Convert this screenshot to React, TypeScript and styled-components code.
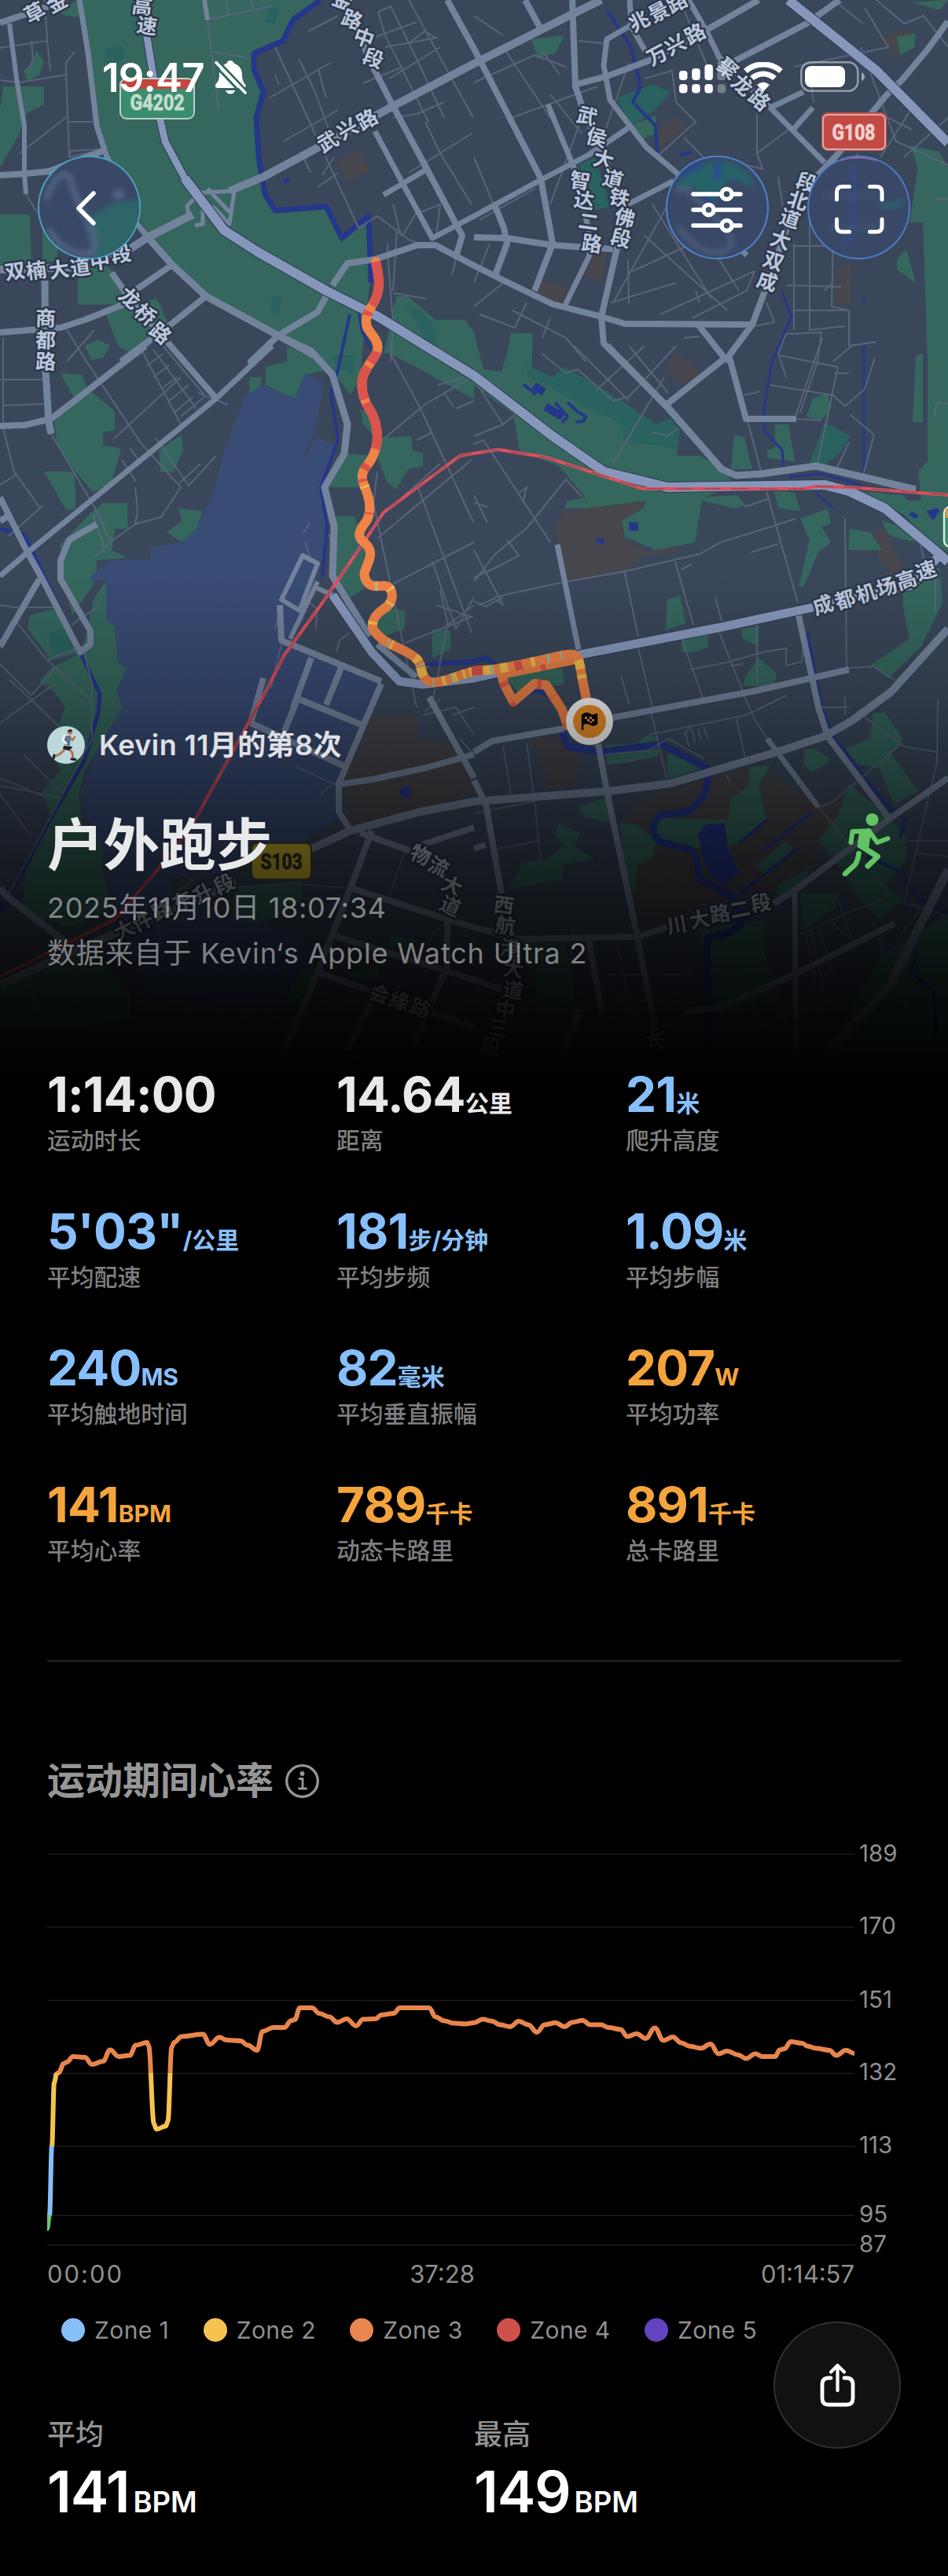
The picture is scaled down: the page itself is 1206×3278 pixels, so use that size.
import React from 'react';
import styled, { createGlobalStyle } from 'styled-components';


const GlobalStyle = createGlobalStyle`
	body {
		margin: 0;
		background: #000;
	}
	* {
		box-sizing: border-box;
	}
`;

const WHITE = '#e8e8e8';
const BLUE = '#87bffa';
const ORANGE = '#f4a43c';

const metrics = [
	{ value: '1:14:00', unit: '', label: '运动时长', color: WHITE },
	{ value: '14.64', unit: '公里', label: '距离', color: WHITE },
	{ value: '21', unit: '米', label: '爬升高度', color: BLUE },
	{ value: '5\'03"', unit: '/公里', label: '平均配速', color: BLUE },
	{ value: '181', unit: '步/分钟', label: '平均步频', color: BLUE },
	{ value: '1.09', unit: '米', label: '平均步幅', color: BLUE },
	{ value: '240', unit: 'MS', label: '平均触地时间', color: BLUE },
	{ value: '82', unit: '毫米', label: '平均垂直振幅', color: BLUE },
	{ value: '207', unit: 'W', label: '平均功率', color: ORANGE },
	{ value: '141', unit: 'BPM', label: '平均心率', color: ORANGE },
	{ value: '789', unit: '千卡', label: '动态卡路里', color: ORANGE },
	{ value: '891', unit: '千卡', label: '总卡路里', color: ORANGE },
];

const zones = [
	{ name: 'Zone 1', color: '#87bffa' },
	{ name: 'Zone 2', color: '#f6c350' },
	{ name: 'Zone 3', color: '#e8874f' },
	{ name: 'Zone 4', color: '#cf514c' },
	{ name: 'Zone 5', color: '#6443c0' },
];

// ---------- map data ----------

const greens = [
	'104,0 408,0 373,25 360,52 323,68 323,87 335,117 326,150 329,200 337,247 350,268 415,263 435,303 469,275 471,360 465,400 458,480 446,503 427,477 400,455 354,427 308,403 262,373 219,333 192,303 173,273 138,200 123,160 115,110 106,33',
	'4,110 56,110 56,133 35,143 23,173 0,213 0,140', '46,63 56,80 50,95 35,103 30,90 42,80',
	'70,14 100,0 100,22 84,20', '0,273 38,273 40,337 0,337', '54,273 73,273 73,333 54,333',
	'99,337 135,337 162,367 154,387 99,388', '135,400 154,392 200,380 215,415 175,455 150,440', '108,440 125,432 140,440 132,455 116,458',
	'504,377 519,377 554,407 592,407 603,423 603,508 558,483 535,470 496,450 488,450',
	'603,423 615,470 638,473 645,450 650,424 678,424 676,470 703,480 718,467 741,480 791,510 834,540 853,533 865,547 861,580 891,580 922,600 934,617 895,633 938,630 949,643 934,647 893,637 884,690 834,700 795,683 791,663 818,647 822,637 745,647 718,647 722,637 745,633 711,593 661,573 653,527 603,490',
	'676,50 718,45 707,67 684,75', '803,160 834,147 834,170 818,177', '1157,185 1195,193 1206,213 1206,460 1180,460 1174,283 1157,283 1168,213',
	'1153,317 1165,360 1141,343 1141,330', '1161,3 1206,0 1195,13', '1141,47 1165,43 1163,60 1145,70',
	'1180,440 1206,440 1206,703 1172,680 1149,653 1145,637 1172,637 1168,600 1180,587', '1165,453 1174,450 1174,537 1161,537',
	'934,553 947,557 957,597 930,597', '986,540 1003,540 1011,587 976,583 976,573 986,570', '1034,507 1053,500 1057,520 1045,535 1026,530',
	'984,623 1011,627 1018,650 991,647', '1018,660 1053,647 1057,667 1045,670 1057,690 1041,703 1022,747 1016,747 1030,687',
	'1080,673 1107,677 1122,700 1080,700', '1122,663 1157,673 1172,690 1149,687 1130,680',
	'1149,727 1195,723 1199,767 1172,823 1130,863 1107,847 1157,813 1149,773', '1095,625 1150,630 1165,660 1150,655',
	'849,763 865,758 872,793 847,802', '868,813 901,807 901,823 884,830 866,830', '943,800 965,797 965,823 945,813',
	'949,860 965,837 988,857 984,873 945,873', '641,860 715,850 718,870 661,883',
	'77,475 104,477 110,493 146,523 146,547 131,550 131,567 154,570 150,587 142,613 119,627 96,600 73,567 69,537 96,510',
	'56,600 94,600 96,623 96,647 85,650', '131,640 162,640 163,673 146,673 142,700 162,710 123,713 123,733 115,750 92,783 81,733 77,693 115,653',
	'202,573 231,553 233,573 221,600 204,600', '227,647 258,650 250,673 231,690 212,677 231,663', '317,480 333,480 331,500 317,503',
	'338,467 365,460 365,440 408,460 419,470 388,477 375,508 338,490', '38,783 77,773 104,830 65,840 35,800',
	'104,830 120,760 135,740 146,800 150,843 162,850 148,877 156,900 146,930 127,950 108,980 100,1010 104,1050 131,1060 131,1113 142,1157 90,1180 31,1163 31,1113 65,1040 54,1007 77,980 62,957 83,900 69,880 50,867 65,850',
	'442,577 475,580 458,620 419,620', '427,657 450,657 458,673 473,707 462,750 446,760 427,730', '458,520 480,530 480,560 462,540',
	'485,557 523,555 525,573 538,577 538,593 519,597 504,623 492,613 481,583', '488,773 515,777 515,800 481,813 473,793', '550,800 573,803 573,827 550,837',
	'788,1047 811,1050 834,1070 830,1093 811,1100 807,1137 799,1137', '736,1027 770,1015 776,1047 745,1040',
	'705,1060 711,1048 738,1060 730,1077 757,1093 718,1100 715,1120 649,1130 665,1097 695,1093 718,1077', '849,957 895,977 849,992',
	'770,948 810,946 820,937 838,937 838,962 800,970 772,974',
	'1111,907 1126,907 1149,940 1134,960 1149,980 1168,1007 1138,1023 1118,977 1091,973 1076,953 1107,940',
	'1080,997 1130,1040 1153,1067 1153,1093 1126,1127 1153,1143 1118,1170 1088,1137 1061,1093 1041,1070 1065,1040',
	'1024,953 1038,953 1057,967 1034,983 1022,973', '1018,1137 1065,1137 1065,1153 1022,1183', '888,1180 976,1170 972,1213 988,1273 911,1290',
	'1206,1163 1206,1340 1053,1340 1122,1213', '300,1128 385,1120 384,1150 345,1170 312,1180 296,1172', '500,1190 530,1195 520,1205 495,1203',
	'440,1240 481,1230 480,1245 465,1248', '365,1230 400,1220 395,1260 370,1275', '0,1255 70,1210 120,1215 165,1260 165,1300 0,1310', '665,1200 720,1198 735,1290 690,1290',
];

const darkGreens = [
	'668,463 703,480 718,467 741,480 791,510 834,540 853,533 865,547 861,573 841,567 795,563 788,537 749,520 707,497 672,480',
	'784,125 830,107 853,117 834,140 803,160', '736,210 757,200 776,263 753,268 749,233', '1049,537 1082,555 1068,577 1049,592 1030,590',
	'133,62 155,58 158,72 148,82 132,80', '515,385 535,395 556,420 556,445 540,432 528,408', '420,452 450,452 452,476 430,470',
	'342,8 355,10 350,30 338,28', '345,378 360,376 354,400 346,398', '60,805 85,800 95,825 70,838',
];

const browns = [
	'428,208 458,190 470,218 443,232', '705,670 718,650 834,637 841,653 815,660 791,663 795,687 826,703 857,687 861,703 818,707 803,723 722,740',
	'845,470 860,447 895,477 872,492', '1113,675 1126,673 1149,723 1134,733 1116,707', '840,162 860,148 873,163 838,190', '752,322 773,322 765,358 738,350',
	'688,355 723,367 714,387 680,372', '1063,345 1083,332 1082,388 1060,388', '1120,50 1138,38 1160,40 1140,75',
	'473,913 531,910 531,940 569,947 588,963 603,1010 531,1030 446,1053 435,1000', '676,940 715,937 741,970 726,1003 699,1003',
	'791,1047 818,1017 853,1003 903,990 949,977 991,990 1041,1027 1072,1010 1057,1063 1030,1103 980,1137 934,1143 849,1177 818,1180 807,1140',
];

const parkGreens = [
	'953,977 980,973 965,1000 972,1033 976,1043 941,1073 926,1077 903,1087 891,1080 841,1070 834,1053 841,1040 872,1043 926,1043 930,1017 953,1000',
	'960,1102 1000,1070 1008,1080 975,1115', '990,1125 1030,1105 1020,1130 988,1145',
];

const lake = '335,490 375,507 388,475 412,488 400,550 385,580 391,578 402,557 427,567 408,627 417,667 408,717 400,747 385,793 362,813 488,867 481,880 438,973 431,1040 385,1070 340,1085 285,1113 250,1108 215,1120 235,1150 290,1165 380,1190 404,1213 346,1280 192,1263 165,1213 146,1147 131,1080 100,1013 127,947 156,900 148,877 162,850 150,840 146,797 135,790 135,737 117,740 115,733 142,713 192,712 190,697 231,690 250,673 269,633 288,567 312,503';

const rivers = [
	{ w: 7, d: 'M408 0L373 25L360 52L323 68L323 87L335 117L326 150L329 200L337 247L350 268L415 263L435 303L469 275L472 360' },
	{ w: 4, d: 'M445 400L430 470L421 500L430 560L408 620L416 670L410 735' }, { w: 3, d: 'M456 395L460 420L472 445' },
	{ w: 5, d: 'M0 673L31 680L42 703L127 883L125 907L108 967L69 1033L0 1163' },
	{ w: 6, d: 'M542 845L603 842L618 837L630 845M658 890L680 878L705 885L722 910' },
	{ w: 9, d: 'M715 930L722 950L765 957L841 947L899 977Q906 1010 876 1033L841 1037Q820 1055 841 1072L876 1080Q890 1090 888 1117L934 1143L945 1170Q940 1188 899 1193L903 1340' },
	{ w: 4, d: 'M934 1143L1017 1078M972 1082L1033 1034M941 1073L975 1043' },
	{ w: 4, d: 'M772 13L803 60L815 110L805 130L834 160L836 197M865 198L880 193' },
	{ w: 3, d: 'M995 373L1007 403L982 460L972 520L972 547L995 573L997 595M1099 380L1099 388M1099 440L1099 607M1038 627L1060 647M1003 607L1045 603L1095 617' },
	{ w: 4, d: 'M1027 806L1045 900L1061 940L1130 1027L1151 1043L1145 1067M1103 1090L1141 1107L1176 1150L1206 1163M1168 1213L1157 1237L1188 1260L1191 1320' },
	{ w: 4, d: 'M666 489L682 502M706 512L722 530L715 538M722 512L735 524L745 530L742 536L733 537' },
	{ w: 10, d: 'M679 491L692 499M694 518L716 530' },
	{ w: 6, d: 'M759 687L769 690M361 231L368 229M1158 653L1167 658M1180 653L1192 650L1185 660' },
	{ w: 11, d: 'M800 670L812 670' },
];

const minorRoads = [
	'M0 61L60 52L57 0M40 52L42 75L36 90M60 52L64 90M84 90L84 80L95 66M84 90L88 200L133 190M88 155L118 155M0 102L25 105L84 95M25 195L86 148M88 200L90 192L128 190M33 247L47 270',
	'M264 25L278 140M264 25L345 8M272 66L313 73M320 0L321 10M290 20L288 0',
	'M350 60L456 290L480 275L520 305L540 312M360 180L430 140M342 125L420 80M392 40L430 20M380 75L400 115L420 170M405 88L415 125M350 95L355 108M410 223L425 200M404 238L430 220M386 200L395 220',
	'M481 15L497 8L530 75L565 150M481 15L490 45L545 155M478 47L530 28M490 60L555 48L540 40L520 55M495 100L560 60M462 106L512 85M520 0L602 150M541 155L560 195L600 260M500 150L530 145L565 130M600 170L560 195L520 220M512 300L530 270M500 260L510 300M535 270L560 260L555 300M505 290L500 370M493 310L493 320L500 410L497 460M500 373L543 380M575 350L580 330',
	'M603 105L680 70L720 85M640 60L700 150M603 20L640 45M700 120L740 170M650 150L760 110M603 200L640 290M690 65L712 95M736 52L768 55M865 0L900 85M800 80L765 180M740 150L700 260M610 280L680 240M820 100L855 90L860 130L885 155L835 200M870 175L895 200M963 145L963 195L970 215L950 210M963 195L1010 160M990 225L1000 290',
	'M1115 0L1150 30L1175 20L1206 60M1095 60L1140 180L1206 210M1030 90L1035 130M1130 150L1160 165M1190 253L1206 253M1165 130L1120 200M1090 195L1110 250M1060 0L1098 30M1100 10L1130 60L1010 85M1206 150L1150 200',
	'M603 390L640 360M623 310L603 360M610 400L655 417L670 385M652 395L720 430L745 460M690 430L700 405M777 385L860 360M799 330L800 387M780 385L850 260M830 260L905 380M864 250L940 370M805 345L880 310M840 400L960 345M820 300L925 395M890 385L885 370M960 345L950 370L880 405M975 385L985 410L960 415M870 430L890 428',
	'M1010 310L1010 420M1010 395L1080 395M1000 363L1070 365M1030 270L1030 420L1075 415M1010 313L1070 313M1060 300L1058 390L1080 395M1080 395L1080 440L1115 435M1048 370L1060 360M1000 480L990 450L1000 425L1045 423L1040 460L1018 525M1046 430L1012 530M990 452L1066 467M1066 467L1040 590M980 490L1060 503L1075 517L1100 495L1113 455M1084 440L1060 460M1082 528L1112 553L1098 605M1080 563L1065 595M1061 475L1080 475M946 503L967 498M1013 533L1045 535M1191 513L1206 513M1191 513L1189 530',
	'M690 450L720 475L735 470L780 510L800 505L860 440M730 440L800 510M758 497L820 440M800 440L850 500M845 480L780 590M829 550L850 555L862 545',
	'M603 483L640 540L656 527M603 565L615 560L700 690M603 555L640 540M603 740L630 705L670 672L720 610L740 632M645 687L660 707L635 720L603 735M603 630L620 665M603 640L620 645M603 700L640 770M640 770L628 762L610 770M628 760L720 740M603 765L618 772L640 760M660 628L670 620L665 640',
	'M722 740L795 727L890 705L917 690L988 668L1012 660M947 645L977 635M951 535L968 600M975 625L1015 767M794 725L812 810M859 715L882 795M910 760L918 790M866 725L880 718M955 703L990 692M868 815L895 890M915 805L945 880M963 795L963 870M877 852L925 843L970 830L1000 825L1000 847L1020 842L1022 825M930 847L945 845M1075 660L1077 855M812 825L830 900M1080 850L1113 848L1138 865M800 895L790 860M1190 725L1190 780M1170 690L1178 720',
	'M497 450L535 520L600 660L603 665M557 490L590 480M478 567L540 515L600 480M565 500L577 518M580 520L603 510M480 685L600 585M480 600L475 640L530 900M490 652L560 590M530 560L550 550M530 615L600 805M500 743L603 690M550 715L580 800L603 760M516 818L600 785L555 770M570 790L550 895M517 856L546 848M475 590L485 550M603 770L570 795L560 750',
	'M0 483L55 483M4 430L4 545L18 600L50 645M4 516L55 514M85 420L110 460L180 565L230 620L205 658L172 667L175 650L172 620M85 460L120 420M145 558L230 480M0 617L22 603M10 683L55 643M172 667L140 690L120 710M65 552L120 645L140 687M198 557L240 618L275 580M228 615L255 590M118 655L132 695M155 585L173 613M165 570L180 590',
	'M180 445L230 540M195 445L250 520M207 440L262 505M195 480L215 465M205 495L225 480M215 510L240 490M222 525L245 505M187 465L208 450M230 530L260 505M252 500L290 515',
	'M0 770L20 773L75 773M20 790L60 840L115 890M60 840L105 822M0 845L40 885L70 850M105 823L117 870L117 940L80 1010L10 1140M0 920L70 870M0 990L60 1015M50 900L100 950M0 1000L80 1015M30 960L80 1010M12 865L50 900M98 790L128 770M92 795L108 782M0 1010L40 1065M45 1175L80 1140L120 1160M35 1220L45 1290M90 1190L97 1260L80 1310M98 1190L98 1260',
	'M395 710L388 690M385 680L394 665M432 660M423 690L418 680M350 800L358 770M385 760L403 775L402 800M428 830L432 815L445 805M345 875L358 820M375 975L430 1000M408 1010L428 995M538 910L580 900M575 910L603 900M580 900L603 935M540 905L560 890M585 940L603 960M232 1112L245 1120L225 1135M195 1155L205 1195L200 1215M270 1130L380 1125L440 1130M515 1085L495 1140M545 1195L560 1180',
	'M640 950L650 1010M670 945L680 1020L690 1110M680 1020L603 1035M633 1080L685 1070M770 960L825 955L850 940L895 965M775 970L805 968L815 962M828 905L848 990M825 935L950 910L1000 885M937 915L948 965M870 935L878 925M880 927L884 945M888 927L892 942M895 925L900 940M872 930L876 950M944 880L960 915L976 940M923 985L928 995',
	'M1075 885L1075 910M1045 900L1080 900M1090 905L1150 950L1192 957M1148 945L1060 1020L1041 1027M1193 890L1192 970L1180 1020L1150 1150L1206 1165M1041 1027L1135 1140L1070 1165L1015 1190M1165 1085L1206 1090M1155 1070L1206 1070M1150 1150L1175 1153L1145 1190M1025 1187L1040 1270M1032 1185L1048 1260M1042 1180L1062 1250M1055 1170L1075 1190M1110 1175L1160 1300M1064 1140L1085 1200M730 1180L720 1280M770 1240L880 1240M770 1250L800 1275M768 1270L830 1275M785 1200L805 1290M915 1237L940 1235L970 1310M970 1210L1000 1300',
];

const roads = [
	{ w: 8, d: 'M0 29L33 18L85 0' },
	{ w: 6, d: 'M12 30L21 100L31 160L31 220L33 247' },
	{ w: 8, d: 'M0 223L33 221L62 218L131 192' },
	{ w: 7, d: 'M101 0L112 67L123 160L135 197L173 283L188 302' },
	{ w: 10, d: 'M0 343L100 340L165 317L188 302L245 273M292 243L335 225L404 188L500 135L603 81L730 17L765 0' },
	{ w: 5, d: 'M240 275L238 262L250 250M255 245L298 243L292 285L270 262M258 265L258 285L248 287M264 240L292 270' },
	{ w: 6, d: 'M260 0L264 25' },
	{ w: 9, d: 'M188 302L219 337L262 377L354 427L400 452' },
	{ w: 8, d: 'M219 337L171 370M262 377L212 417L154 460M185 440L65 533L31 541L0 542M142 347L165 380L275 507' },
	{ w: 8, d: 'M0 423L77 417L108 407L158 387' },
	{ w: 9, d: 'M57 357L58 473L62 537L65 552' },
	{ w: 8, d: 'M346 440L319 460L354 427L404 397L415 377M423 363L442 335L477 330L531 312L554 312L603 338L641 357L703 387L765 403L795 412L957 413L972 373L1015 250L1065 197L1126 123L1149 100L1180 63L1206 27' },
	{ w: 8, d: 'M569 0L603 62L688 227L703 310L680 370' },
	{ w: 8, d: 'M436 0L477 90L500 135L542 213L588 300L581 323' },
	{ w: 7, d: 'M477 167L512 233L550 303L603 275L688 229L749 197L799 163M488 248L542 216' },
	{ w: 8, d: 'M668 0L688 37M728 0L732 110L741 137L780 227L795 280L784 320L765 403L768 437L791 460' },
	{ w: 7, d: 'M801 0L803 33L822 67M876 0L899 40L915 73L980 137L1049 207M803 32L772 50L768 83L776 127L822 187L861 220L905 280L950 325' },
	{ w: 8, d: 'M734 107L772 97L826 77L899 38L965 0M926 82L1026 30L1068 0' },
	{ w: 7, d: 'M980 137L1022 117M1007 167L1034 137' },
	{ w: 8, d: 'M603 302L645 303L703 312L780 317M630 350L645 310L641 290L630 263' },
	{ w: 7, d: 'M697 133L730 213L753 310L749 327L718 390M799 260L857 230' },
	{ w: 8, d: 'M888 413L922 456L845 517M957 413L922 460M928 455L949 533L1013 533' },
	{ w: 9, d: 'M772 440L849 518L918 597L936 605L968 603L1038 593L1165 623' },
	{ w: 7, d: 'M709 693L736 827' },
	{ w: 8, d: 'M1016 783L1041 900L1053 937L1130 1040' },
	{ w: 8, d: 'M603 957L626 943L718 927M780 913L957 880L1080 852' },
	{ w: 10, d: 'M1206 800L1134 880L1084 917L1049 937L988 957L853 997L772 1007L603 1020L535 1033L446 1057L396 1080M300 1123L135 1193L0 1253' },
	{ w: 8, d: 'M761 947L772 1007L811 1193L834 1313' },
	{ w: 8, d: 'M1206 990L1130 1043L1011 1133L984 1150M849 1180L811 1192L661 1195L603 1180L569 1170L446 1130' },
	{ w: 7, d: 'M976 940L1041 1027M1011 1137L1013 1340' },
	{ w: 8, d: 'M872 1287L915 1282L1011 1240L1138 1175' },
	{ w: 11, d: 'M1206 1107L1130 1257L1053 1337' },
	{ w: 8, d: 'M603 993L618 1023L638 1137M603 1080L618 1075M749 1197L766 1290M738 1285L718 1337' },
	{ w: 8, d: 'M381 890L462 923M377 893L362 930M319 920L438 975M485 870L431 997L431 1033L446 1057M431 998L473 992L542 977L603 960' },
	{ w: 8, d: 'M546 887L588 963L603 990M473 1057L446 1130L404 1237L362 1337M458 1060L523 1083M531 1077L603 1053' },
	{ w: 8, d: 'M569 1170L569 1230L527 1327M423 1190L603 1247L640 1260M404 1237L469 1260L603 1307M473 1273L442 1337' },
	{ w: 9, d: 'M0 1130L8 1140L85 1200' },
	{ w: 8, d: 'M0 633L35 703L54 737L102 830L115 820L115 803L77 737L77 713L88 687L123 667M50 737L0 823M0 663L10 657' },
	{ w: 7, d: 'M0 733L35 703L275 507L346 440' },
	{ w: 6, d: 'M385 707L404 717L381 777L358 763ZM404 740L369 813M400 747L423 757' },
	{ w: 8, d: 'M356 770L358 815L485 867M396 837L373 900M435 847L415 897M335 863L319 920M480 820L530 862' },
	{ w: 9, d: 'M354 427L396 447L423 477L442 540L438 577L413 620L425 670L423 733L470 810' },
];

const highways = [
	{ w: 9, d: 'M181 0L187 47L204 153L210 180L235 227L285 293L327 320' },
	{ w: 12, d: 'M235 227L285 293L327 320L415 370L481 403L577 462L603 478L703 555L768 600L849 620L1049 617L1080 625L1126 647L1195 705L1206 715' },
	{ w: 12, d: 'M1003 0L1115 90L1206 182' },
	{ w: 11, d: 'M1195 707L1160 745L1034 773L918 798L738 833L603 863L538 871L508 867L473 830L423 757' },
];

const railway = 'M0 1243L146 1170L212 1093L246 1047L338 880L362 833L408 770L458 697L488 652L554 603L585 580L603 577L634 572L695 582L818 622L1022 622L1038 619L1080 620L1206 630';

const placeNames: { text: string; turn: number; at: number[][] }[] = [
	{ text: '草金', turn: -28, at: [[44, 16], [72, 3]] },
	{ text: '高速', turn: 8, at: [[181, 8], [187, 33]] },
	{ text: '金路中段', turn: 20, at: [[436, 0], [448, 25], [463, 48], [475, 74]] },
	{ text: '武兴路', turn: -30, at: [[417, 180], [442, 164], [467, 152]] },
	{ text: '双楠大道中段', turn: -8, at: [[19, 345], [46, 344], [75, 343], [102, 340], [127, 332], [154, 323]] },
	{ text: '龙桥路', turn: 40, at: [[165, 379], [185, 400], [204, 424]] },
	{ text: '商都路', turn: 2, at: [[58, 405], [58, 433], [58, 460]] },
	{ text: '兆景路', turn: -28, at: [[813, 27], [838, 15], [861, 3]] },
	{ text: '万兴路', turn: -28, at: [[836, 70], [859, 57], [884, 43]] },
	{ text: '聚龙路', turn: 40, at: [[926, 87], [944, 108], [966, 127]] },
	{ text: '武侯大道铁佛段', turn: 14, at: [[747, 148], [759, 175], [768, 203], [780, 228], [788, 252], [795, 277], [790, 303]] },
	{ text: '智达二路', turn: 8, at: [[738, 230], [743, 255], [749, 282], [753, 310]] },
	{ text: '成双大道北段', turn: 18, at: [[976, 358], [984, 332], [993, 305], [1005, 278], [1015, 255], [1026, 232]] },
	{ text: '成都机场高速', turn: -18, at: [[1047, 770], [1075, 763], [1102, 755], [1128, 747], [1153, 738], [1178, 726]] },
	{ text: '物流大道', turn: 25, at: [[535, 1088], [558, 1103], [575, 1127], [573, 1153]] },
	{ text: '西航港大道中三段', turn: 8, at: [[641, 1152], [643, 1178], [649, 1207], [653, 1233], [653, 1260], [643, 1285], [634, 1308], [624, 1332]] },
	{ text: '川大路二段', turn: -10, at: [[861, 1177], [890, 1170], [916, 1163], [941, 1157], [968, 1149]] },
	{ text: '会缘路', turn: 20, at: [[483, 1265], [508, 1274], [535, 1283]] },
	{ text: '大件路东升段', turn: -26, at: [[158, 1183], [181, 1172], [206, 1158], [232, 1147], [258, 1137], [285, 1125]] },
	{ text: '长', turn: 8, at: [[834, 1323]] },
];

const track = [
	[478, 333], [482, 352], [482, 368], [477, 384], [467, 398], [465, 414], [472, 424], [480, 435], [481, 447], [470, 463], [461, 478], [460, 495], [465, 513],
	[475, 528], [480, 548], [480, 565], [473, 585], [462, 598], [460, 610], [466, 624], [471, 641], [469, 660], [459, 672], [456, 684], [469, 695],
	[472, 706], [467, 720], [462, 732], [469, 745], [481, 746], [494, 745], [500, 756], [496, 770], [480, 780], [473, 793], [475, 803], [490, 817],
	[519, 830], [534, 841], [537, 859], [546, 869], [565, 867], [603, 853], [626, 853], [680, 842], [726, 831], [736, 836], [740, 860], [746, 890], [750, 910],
];
const trackLoop = 'M732 839L638 858L641 870L653 893L680 870L695 872L715 903L722 923';

// ---------- heart rate data ----------

const gridLines = [
	{ label: '189', y: 9.6 },
	{ label: '170', y: 102.4 },
	{ label: '151', y: 195.6 },
	{ label: '132', y: 288.4 },
	{ label: '113', y: 381.2 },
	{ label: '95', y: 469.2 },
	{ label: '87', y: 507 },
];

const heartRate = [
	[0, 486], [3, 469], [6, 381], [9, 300], [12, 289], [15, 287], [21, 276], [25, 274], [33, 267], [48, 268], [57, 277], [71, 273], [80, 258.5],
	[91, 267], [105, 265.5], [113, 252.5], [127, 249], [129, 253], [136, 353], [139, 359.5], [151, 355.5], [153.5, 349], [158.5, 255], [161.5, 249],
	[171, 241.5], [198, 238.5], [207, 251.5], [219, 242.5], [228.5, 246], [246, 247], [255, 252.5], [267, 259], [274, 235], [288, 230], [302, 230],
	[310, 221.5], [315, 220], [321.5, 205], [337, 205], [346, 212], [359, 216.5], [369, 223.5], [381, 219], [393, 228], [402, 219.5], [418, 219],
	[425, 214], [441, 212], [448.5, 205], [486, 205], [494, 216.5], [505, 221.5], [517, 224.5], [532, 225.5], [543, 224], [554, 219.5], [566, 222],
	[576, 226.5], [589, 229], [600, 222], [612, 226.5], [623, 236], [633, 226.5], [647, 224], [658, 229], [668, 223.5], [681, 221], [691, 226.5],
	[704.5, 226.5], [714, 230], [729.5, 232.5], [738, 241.5], [750, 238], [761.5, 244], [773, 230.5], [784, 246.5], [796, 242], [806.5, 249.5],
	[818, 254], [831.5, 256.5], [844, 251], [854, 263.5], [865, 260], [879.5, 265], [889, 269.5], [901, 263.5], [910, 267], [926, 267], [932, 258.5],
	[938, 257], [946, 248], [960, 250], [968, 254], [978, 256.5], [995, 259], [1004, 265.5], [1016, 259], [1027, 263],
];

const toCurve = (points: number[][]) =>
	points.reduce((d, [x, y], i) => {
		if (i === 0) return `M${x} ${y}`;
		const [px, py] = points[i - 1];
		const k = (x - px) * 0.4;
		return `${d}C${px + k} ${py} ${x - k} ${y} ${x} ${y}`;
	}, '');

// rounded corners through the midpoints of the gps samples
const toTrack = (points: number[][]) =>
	points.reduce((d, [x, y], i) => {
		if (i === 0) return `M${x} ${y}`;
		const next = points[i + 1];
		if (!next) return `${d}L${x} ${y}`;
		return `${d}Q${x} ${y} ${(x + next[0]) / 2} ${(y + next[1]) / 2}`;
	}, '');

const CityMap: React.FC = () => (
	<MapCanvas viewBox="0 0 1206 1380">
		<defs>
			<linearGradient id="fade" x1="0" y1="0" x2="0" y2="1380" gradientUnits="userSpaceOnUse">
				<stop offset="0.53" stopColor="#000" stopOpacity="0" />
				<stop offset="0.64" stopColor="#000" stopOpacity="0.2" />
				<stop offset="0.73" stopColor="#000" stopOpacity="0.44" />
				<stop offset="0.8" stopColor="#000" stopOpacity="0.63" />
				<stop offset="0.87" stopColor="#000" stopOpacity="0.78" />
				<stop offset="0.94" stopColor="#000" stopOpacity="0.91" />
				<stop offset="1" stopColor="#000" />
			</linearGradient>
		</defs>
		<rect width="1206" height="1380" fill="#3a475a" />
		{browns.map((p) => <polygon key={p} points={p} fill="#46464c" />)}
		{greens.map((p) => <polygon key={p} points={p} fill="#35675e" />)}
		{parkGreens.map((p) => <polygon key={p} points={p} fill="#35675e" />)}
		{darkGreens.map((p) => <polygon key={p} points={p} fill="#29625f" />)}
		<polygon points={lake} fill="#394c75" />
		<polygon points="895,1050 922,1047 926,1080 941,1110 918,1128 899,1107 888,1063" fill="#25378a" />
		<g fill="none" stroke="#25378a" strokeLinejoin="round">
			{rivers.map((r) => <path key={r.d} d={r.d} strokeWidth={r.w} />)}
		</g>
		<ellipse cx="516" cy="1008" rx="7" ry="8" fill="#25378a" />
		<g fill="none" stroke="#59647a" strokeWidth="2">
			{minorRoads.map((d) => <path key={d} d={d} />)}
		</g>
		<g fill="none" stroke="#74839c" strokeLinejoin="round">
			{roads.map((r) => <path key={r.d} d={r.d} strokeWidth={r.w} />)}
		</g>
		<g fill="none" strokeLinejoin="round">
			{highways.map((r) => <path key={r.d} d={r.d} stroke="#2f3b52" strokeWidth={r.w + 2} />)}
			{highways.map((r) => <path key={r.d} d={r.d} stroke="#8797bc" strokeWidth={r.w} />)}
			<path d={railway} stroke="#e0505c" strokeWidth="4" />
			<path d={railway} stroke="#6b4a5e" strokeWidth="1" strokeDasharray="22 14" />
		</g>

		<g fontFamily="'Noto Sans CJK SC', sans-serif" fontSize="26" fontWeight="700" fill="#bcc7dd" stroke="#2c3749" strokeWidth="5" strokeLinejoin="round" paintOrder="stroke" textAnchor="middle">
			{placeNames.map((n) => n.at.map(([x, y], i) => (
				<text key={`${n.text}${i}`} transform={`translate(${x} ${y}) rotate(${n.turn})`} y="9.5">{n.text[i]}</text>
			)))}
		</g>

		<g fontFamily="Roboto, 'Liberation Sans', sans-serif" fontSize="27" fontWeight="700" textAnchor="middle">
			<rect x="153" y="100" width="94" height="51" rx="8" fill="#3c8c70" />
			<path d="M153 113V108Q153 100 161 100H239Q247 100 247 108V113Z" fill="#c4463f" />
			<rect x="153" y="100" width="94" height="51" rx="8" fill="none" stroke="#b9d3c6" strokeWidth="2" />
			<text x="200" y="140" fill="#c5dccf" stroke="#c5dccf" strokeWidth="0.8" textLength="69" lengthAdjust="spacingAndGlyphs">G4202</text>
			<rect x="1045" y="143" width="83" height="49" rx="8" fill="#c24a45" />
			<rect x="1047" y="146" width="79" height="44" rx="6" fill="none" stroke="#e0aaa8" strokeWidth="2" />
			<text x="1086" y="178" fill="#f0d0ce" stroke="#f0d0ce" strokeWidth="0.8" textLength="55" lengthAdjust="spacingAndGlyphs">G108</text>
			<rect x="320" y="1073" width="76" height="46" rx="7" fill="#d8bc30" stroke="#4a4630" strokeWidth="2" />
			<text x="358" y="1106" fill="#30301f" stroke="#30301f" strokeWidth="0.8" textLength="53" lengthAdjust="spacingAndGlyphs">S103</text>
			<rect x="1201" y="645" width="60" height="51" rx="8" fill="#3c8c70" stroke="#dce8de" strokeWidth="2.5" />
			<rect x="1203" y="647" width="10" height="12" fill="#d99a35" />
		</g>

		<g fill="none" strokeLinejoin="round" strokeWidth="12">
			<path d={trackLoop} stroke="#e87f47" strokeLinecap="round" />
			<path d={trackLoop} stroke="#d9564a" strokeDasharray="1 38 6 22" />
			<path d={toTrack(track)} stroke="#f08448" strokeLinecap="round" />
			<path d={toTrack(track)} stroke="#d8544c" strokeDasharray="58 8 6 50 16 6 44 5 62 22 8 12 4 40 2 2000" />
			<path d={toTrack(track)} stroke="#f3bb4e" strokeDasharray="0 306 3 142 3 16 3 16 3 30 4 36 3 32 7 8 12 26 5 8 7 7 4 5 12 6 14 8 10 30 5 60 12 7 5 30 4 12 3 9 4 2000" />
			<path d={toTrack(track)} stroke="#9fb996" strokeDasharray="0 451 2 104 2 49 2 28 2 22 2 50 3 70 3 14 2 2000" />
			<path d="M600 854L614 853M655 848L664 846" stroke="#d8544c" />
		</g>

		<circle cx="750" cy="918" r="30" fill="#f7f7f7" />
		<circle cx="750" cy="918" r="21" fill="#eb8d26" />
		<path d="M741 928V910Q746 906 750 909T759 909V921Q755 924 750 921T741 922" fill="#0a0a0a" stroke="#0a0a0a" strokeWidth="2.5" strokeLinecap="round" strokeLinejoin="round" />
		<path d="M744 912h3v3h-3zM750 912h3v3h-3zM747 915h3v3h-3zM753 915h3v3h-3zM750 918h3v2h-3z" fill="#eb8d26" />
		<rect width="1206" height="1380" fill="url(#fade)" />
	</MapCanvas>
);

const SilentBell: React.FC = () => (
	<svg width="42" height="44" viewBox="0 0 42 44" fill="none">
		<path d="M20 1C22.500 1 24 2.500 24.500 4.500C31 6.500 35 12 35 19C35 26 37 29 39 31.500C40.500 34 39 36 37 36H4C1 36 0 33 2 30.500C5 27 6 24 6 19C6 12 9.500 6.500 15.500 4.500C16 2.500 17.500 1 20 1Z" fill="#fff" />
		<path d="M14 39H26C25 42 23 43.500 20 43.500S15 42 14 39Z" fill="#fff" />
		<path d="M-1 6L36 45M4 1L42 41" stroke="#33685d" strokeWidth="3" />
		<path d="M2 3.500L39 42" stroke="#fff" strokeWidth="3.500" strokeLinecap="round" />
	</svg>
);

const Signal: React.FC = () => (
	<svg width="60" height="42" viewBox="0 0 60 42" fill="#fff">
		<rect x="0" y="13" width="10.500" height="12" rx="4" />
		<rect x="16.200" y="10" width="10.500" height="15" rx="4" />
		<rect x="32.400" y="5" width="10.500" height="20" rx="4" />
		<rect x="48.600" y="0" width="10.500" height="25" rx="4" opacity="0.3" />
		<rect x="0" y="30" width="10.500" height="11.500" rx="4" />
		<rect x="16.200" y="30" width="10.500" height="11.500" rx="4" />
		<rect x="32.400" y="30" width="10.500" height="11.500" rx="4" />
		<rect x="48.600" y="30" width="10.500" height="11.500" rx="4" opacity="0.3" />
	</svg>
);

const Wifi: React.FC = () => (
	<svg width="52" height="38" viewBox="0 0 52 38" fill="none">
		<path d="M3.500 11.500C16 0 36 0 48.500 11.500" stroke="#fff" strokeWidth="7" />
		<path d="M11.500 20.500C20 13 32 13 40.500 20.500" stroke="#fff" strokeWidth="7" />
		<path d="M18 29Q26 22 34 29L26 37.500Z" fill="#fff" />
	</svg>
);

const Battery: React.FC = () => (
	<svg width="83" height="40" viewBox="0 0 83 40">
		<rect x="1.300" y="1.300" width="72" height="36.500" rx="12" fill="none" stroke="#fff" strokeOpacity="0.45" strokeWidth="2.600" />
		<rect x="6" y="6" width="51" height="27" rx="8" fill="#fff" />
		<path d="M78 14Q82 16 82 19.500T78 25Z" fill="#fff" fillOpacity="0.5" />
	</svg>
);

const Avatar: React.FC = () => (
	<svg width="48" height="48" viewBox="0 0 48 48" fill="none" strokeLinecap="round" strokeLinejoin="round">
		<circle cx="24" cy="24" r="24" fill="#bcd8da" />
		<path d="M26 27L32 34L33 42" stroke="#b5714f" strokeWidth="3" />
		<path d="M24 28L17 35L9 39" stroke="#b5714f" strokeWidth="3" />
		<path d="M9 37L8 41M31 42L36 42.500" stroke="#16202c" strokeWidth="3" />
		<path d="M22 26L31 27L27 30L21 28Z" fill="#16202c" stroke="#16202c" strokeWidth="2" />
		<path d="M21 13L30 12L29 25L22 24Z" fill="#58758a" />
		<path d="M22 12L20 18L24 22" stroke="#f2f2f2" strokeWidth="3" />
		<path d="M30 15L32 18L35 14" stroke="#b5714f" strokeWidth="2.500" />
		<circle cx="29" cy="7.500" r="3.200" fill="#b5714f" />
		<path d="M26 7Q27 3 32 5L31 7Z" fill="#16202c" />
	</svg>
);

const Runner: React.FC = () => (
	<svg width="62" height="80" viewBox="0 0 62 80" fill="none" stroke="#63c466" strokeLinecap="round" strokeLinejoin="round">
		<circle cx="38.500" cy="8" r="8" fill="#63c466" stroke="none" />
		<path d="M11.500 37L13.500 23H33" strokeWidth="6" />
		<path d="M24 21L36 21L33 42L26 45L21 42Z" fill="#63c466" strokeWidth="3" />
		<path d="M34 22L45 37L58.500 32" strokeWidth="6" />
		<path d="M25 42L45.500 55L33 67" strokeWidth="7" />
		<path d="M21.500 51Q20 62 16 66L4 77" strokeWidth="6.500" />
	</svg>
);

const InfoIcon: React.FC = () => (
	<svg width="43" height="43" viewBox="0 0 43 43" fill="none" stroke="#969696" strokeLinecap="round" strokeLinejoin="round">
		<circle cx="21.500" cy="21.500" r="19.800" strokeWidth="3.300" />
		<path d="M18 18.500H22V31M17.500 31H26.500" strokeWidth="2.800" />
		<circle cx="21.500" cy="12" r="2.900" fill="#969696" stroke="none" />
	</svg>
);

const HeartChart: React.FC = () => (
	<ChartSvg viewBox="0 0 1085 520">
		<defs>
			<linearGradient id="zones" x1="0" y1="0" x2="0" y2="520" gradientUnits="userSpaceOnUse">
				<stop offset={288.4 / 520} stopColor="#e8854c" />
				<stop offset={288.4 / 520} stopColor="#f7c34f" />
				<stop offset={381.2 / 520} stopColor="#f7c34f" />
				<stop offset={381.2 / 520} stopColor="#86befa" />
				<stop offset={469.2 / 520} stopColor="#86befa" />
				<stop offset={469.2 / 520} stopColor="#6fc572" />
			</linearGradient>
			<clipPath id="plot"><rect width="1027" height="520" /></clipPath>
		</defs>
		{gridLines.map((g) => (
			<g key={g.label}>
				<line x1="0" x2="1027" y1={g.y} y2={g.y} stroke="#1c1c1c" strokeWidth="1.500" />
				<text x="1033" y={g.y + 9} fontSize="29.500">{g.label}</text>
			</g>
		))}
		<path d={toCurve(heartRate)} clipPath="url(#plot)" fill="none" stroke="url(#zones)" strokeWidth="6" strokeLinejoin="round" />
	</ChartSvg>
);

const App: React.FC = () => (
	<Page>
		<GlobalStyle />
		<CityMap />
		<Content>
			<StatusBar>
				<Clock>19:47</Clock>
				<SilentBell />
				<StatusIcons>
					<Signal />
					<Wifi />
					<Battery />
				</StatusIcons>
			</StatusBar>

			<NavRow>
				<GlassButton $rim="#4f9fc4">
					<svg viewBox="0 0 131 131" fill="none">
						<defs><filter id="soft"><feGaussianBlur stdDeviation="3" /></filter></defs>
						<g filter="url(#soft)">
							<path d="M60 80L95 60L131 55V131H70Z" fill="#2f6568" />
							<path d="M10 55Q25 15 40 25Q50 60 65 85Q80 115 66 124Q30 125 14 92" stroke="#536385" strokeWidth="7" />
							<circle cx="103" cy="48" r="7" fill="#50658a" />
						</g>
						<path d="M71 47L52 66L71 85" stroke="#fff" strokeWidth="5.500" strokeLinecap="round" strokeLinejoin="round" />
					</svg>
				</GlassButton>
				<GlassButton $rim="#4d83cf" $push>
					<svg viewBox="0 0 131 131" fill="none">
						<g filter="url(#soft)">
							<path d="M10 42Q30 8 70 6Q105 12 115 38L80 28L60 60L35 38Z" fill="#286469" />
							<path d="M66 8L66 30M20 22L45 10M54 50L56 62" stroke="#294293" strokeWidth="7" />
							<path d="M12 44Q25 35 40 55L78 92Q92 118 70 122Q40 125 16 90" stroke="#506080" strokeWidth="5" />
						</g>
						<g stroke="#fff" strokeWidth="5.500" strokeLinecap="round">
							<path d="M35 48H69M86 48H95M35 68H46M63 68H95M35 88H69M86 88H95" />
							<circle cx="77.500" cy="48" r="6.500" />
							<circle cx="54.500" cy="68" r="6.500" />
							<circle cx="77.500" cy="88" r="6.500" />
						</g>
					</svg>
				</GlassButton>
				<GlassButton $rim="#4c7bc6">
					<svg viewBox="0 0 131 131" fill="none">
						<g filter="url(#soft)">
							<path d="M58 8V90Q55 110 42 112" stroke="#34488c" strokeWidth="5" />
							<path d="M92 62Q110 65 122 56" stroke="#2f5f70" strokeWidth="9" />
							<path d="M20 50H90M25 90H100" stroke="#42557a" strokeWidth="4" />
						</g>
						<path d="M37.500 55V45.500Q37.500 38.500 44.500 38.500H53.500M79.500 38.500H88Q95 38.500 95 45.500V55M95 80V89Q95 96 88 96H79.500M53.500 96H44.500Q37.500 96 37.500 89V80" stroke="#fff" strokeWidth="5" strokeLinecap="round" />
						<path d="M42 5Q65 -2 88 5" stroke="#a564a8" strokeWidth="2" />
					</svg>
				</GlassButton>
			</NavRow>

			<Owner>
				<Avatar />
				<OwnerName>Kevin 11月的第8次</OwnerName>
			</Owner>
			<TitleRow>
				<Title>户外跑步</Title>
				<Runner />
			</TitleRow>
			<Meta $spacing={0.7}>2025年11月10日 18:07:34</Meta>
			<Meta $spacing={0.85}>数据来自于 Kevin‘s Apple Watch Ultra 2</Meta>

			<MetricGrid>
				{metrics.map((m) => (
					<div key={m.label}>
						<MetricValue $color={m.color}>
							{m.value}
							{m.unit && <Unit>{m.unit}</Unit>}
						</MetricValue>
						<MetricLabel>{m.label}</MetricLabel>
					</div>
				))}
			</MetricGrid>

			<Divider />

			<SectionTitle>
				运动期间心率
				<InfoIcon />
			</SectionTitle>
			<HeartChart />
			<TimeAxis>
				<span>00:00</span>
				<span>37:28</span>
				<span>01:14:57</span>
			</TimeAxis>
			<Legend>
				{zones.map((z) => (
					<LegendItem key={z.name}>
						<Dot $color={z.color} />
						{z.name}
					</LegendItem>
				))}
			</Legend>
			<Summary>
				<div>
					<SummaryLabel>平均</SummaryLabel>
					<SummaryValue>141<SummaryUnit>BPM</SummaryUnit></SummaryValue>
				</div>
				<div>
					<SummaryLabel>最高</SummaryLabel>
					<SummaryValue>149<SummaryUnit>BPM</SummaryUnit></SummaryValue>
				</div>
			</Summary>
		</Content>
		<ShareButton>
			<svg width="45" height="56" viewBox="0 0 45 56" fill="none" stroke="#fff" strokeWidth="4.800" strokeLinecap="round" strokeLinejoin="round">
				<path d="M14 19H11Q3 19 3 27V45Q3 53 11 53H34Q42 53 42 45V27Q42 19 34 19H31" />
				<path d="M22.500 35V4M14 11.500L22.500 3L31 11.500" strokeWidth="4.200" />
			</svg>
		</ShareButton>
	</Page>
);

export default App;

const Page = styled.div`
	position: relative;
	width: 1206px;
	height: 3278px;
	overflow: hidden;
	background: #000;
	color: #fff;
	font-family: Inter, 'Noto Sans CJK SC', sans-serif;
`;

// sits behind the header content
const MapCanvas = styled.svg`
	position: absolute;
	top: 0;
	left: 0;
	width: 1206px;
	height: 1380px;
`;

const Content = styled.div`
	position: relative;
	display: flex;
	flex-direction: column;
	padding: 0 60px;
`;

const StatusBar = styled.div`
	display: flex;
	align-items: center;
	height: 196px;
	padding: 0 45px 0 70px;
`;

const Clock = styled.span`
	width: 130px;
	margin-right: 13px;
	font-size: 51px;
	font-weight: 600;
	letter-spacing: -0.8px;
	white-space: nowrap;
`;

const StatusIcons = styled.div`
	display: flex;
	align-items: center;
	gap: 21px;
	margin-left: auto;
`;

const NavRow = styled.div`
	display: flex;
	gap: 49px;
	margin: 2px -12px 0;
`;

const GlassButton = styled.button<{ $rim: string; $push?: boolean }>`
	width: 131px;
	height: 132px;
	padding: 0;
	margin-left: ${(p) => (p.$push ? 'auto' : '0')};
	border: 2px solid ${(p) => p.$rim};
	border-radius: 50%;
	background: #394866;
	overflow: hidden;

	svg {
		display: block;
		width: 131px;
		height: 131px;
		margin: -2px;
	}
`;

const Owner = styled.div`
	display: flex;
	align-items: center;
	gap: 18px;
	height: 48px;
	margin-top: 594px;
`;

const OwnerName = styled.span`
	font-size: 36px;
	font-weight: 600;
	line-height: 48px;
	letter-spacing: 0.4px;
	color: #dfe0e4;
`;

const TitleRow = styled.div`
	display: flex;
	align-items: center;
	justify-content: space-between;
	height: 80px;
	margin: 63px 13px 11px 0;
`;

const Title = styled.h1`
	margin: 0;
	font-size: 71.5px;
	font-weight: 700;
	line-height: 80px;
	color: #e8e9ea;
`;

const Meta = styled.p<{ $spacing: number }>`
	margin: 0;
	font-size: 36px;
	line-height: 58px;
	letter-spacing: ${(p) => p.$spacing}px;
	color: rgba(255, 255, 255, 0.47);
`;

const MetricGrid = styled.div`
	display: grid;
	grid-template-columns: repeat(3, 368px);
	row-gap: 64px;
	margin-top: 119px;
`;

const MetricValue = styled.div<{ $color: string }>`
	height: 64px;
	font-size: 62px;
	font-weight: 700;
	line-height: 64px;
	letter-spacing: -0.8px;
	white-space: nowrap;
	color: ${(p) => p.$color};
`;

const Unit = styled.span`
	margin-left: 0;
	font-size: 30px;
	line-height: 1;
	letter-spacing: 0;
`;

const MetricLabel = styled.div`
	margin-top: 6px;
	font-size: 29.8px;
	font-weight: 500;
	line-height: 40px;
	color: #7f7f7f;
`;

const Divider = styled.hr`
	width: 100%;
	height: 3px;
	margin: 119px 0 121px;
	border: 0;
	background: #1d1d1d;
`;

const SectionTitle = styled.h2`
	display: flex;
	align-items: center;
	gap: 15px;
	height: 60px;
	margin: 0 0 54px;
	font-size: 48px;
	font-weight: 700;
	line-height: 60px;
	color: #969696;
`;

const ChartSvg = styled.svg`
	width: 1085px;
	height: 520px;
	overflow: visible;
	fill: #8f8f8f;
`;

const TimeAxis = styled.div`
	display: flex;
	justify-content: space-between;
	width: 1027px;
	margin-top: 4px;
	font-size: 31px;
	line-height: 40px;
	color: #8f8f8f;

	span:first-child {
		letter-spacing: 2px;
	}
`;

const Legend = styled.div`
	display: flex;
	gap: 43.5px;
	margin: 31px 0 0 18px;
`;

const LegendItem = styled.div`
	display: flex;
	align-items: center;
	gap: 12px;
	height: 40px;
	font-size: 30px;
	letter-spacing: 0.4px;
	white-space: nowrap;
	color: #8f8f8f;
`;

const Dot = styled.i<{ $color: string }>`
	width: 30px;
	height: 30px;
	border-radius: 50%;
	background: ${(p) => p.$color};
`;

const Summary = styled.div`
	display: grid;
	grid-template-columns: 543px 543px;
	margin-top: 88px;
`;

const SummaryLabel = styled.div`
	font-size: 36px;
	font-weight: 500;
	line-height: 50px;
	color: #939393;
`;

const SummaryValue = styled.div`
	height: 80px;
	margin-top: 8px;
	font-size: 73px;
	font-weight: 600;
	line-height: 80px;
	letter-spacing: -1.2px;
`;

const SummaryUnit = styled.span`
	margin-left: 5px;
	font-size: 36.5px;
	line-height: 1;
	letter-spacing: 0;
`;

// floats over the page content
const ShareButton = styled.button`
	position: absolute;
	top: 2954px;
	left: 984px;
	display: flex;
	align-items: center;
	justify-content: center;
	width: 162px;
	height: 162px;
	padding: 0;
	border: 2px solid #303030;
	border-radius: 50%;
	background: #111;
`;
